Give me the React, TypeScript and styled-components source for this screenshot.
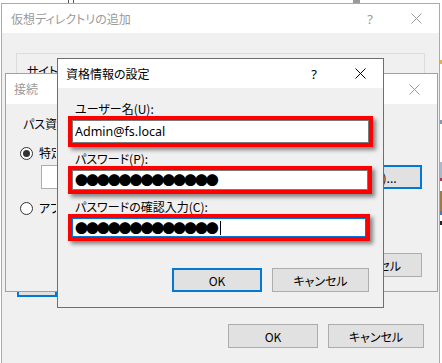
import React from "react";
import styled, { createGlobalStyle } from "styled-components";

const GlobalStyle = createGlobalStyle`
  html, body { margin: 0; padding: 0; background: #ffffff; }
  body {
    font-family: "Noto Sans CJK JP", "Noto Sans", sans-serif;
    font-size: 12px;
    font-feature-settings: "palt";
    color: #000;
  }
`;

const Desktop = styled.div`
  position: relative;
  width: 442px;
  height: 363px;
  overflow: hidden;
  background: #ffffff;
`;

const TopStrip = styled.div`
  position: absolute;
  left: 0;
  top: 0;
  width: 442px;
  height: 3px;
  display: flex;
`;

const StripPiece = styled.div<{ $w: number; $c: string }>`
  width: ${(p) => p.$w}px;
  flex: none;
  background: ${(p) => p.$c};
`;

const SideStrip = styled.div`
  position: absolute;
  left: 440px;
  top: 0;
  width: 2px;
  height: 363px;
  display: flex;
  flex-direction: column;
`;

const SidePiece = styled.div<{ $h: number; $c: string }>`
  height: ${(p) => p.$h}px;
  flex: none;
  background: ${(p) => p.$c};
`;

const Window = styled.div<{ $x: number; $y: number; $w: number; $h: number; $border: string }>`
  position: absolute;
  left: ${(p) => p.$x}px;
  top: ${(p) => p.$y}px;
  width: ${(p) => p.$w}px;
  height: ${(p) => p.$h}px;
  box-sizing: border-box;
  border: 1px solid ${(p) => p.$border};
  background: #f0f0f0;
  display: flex;
  flex-direction: column;
  overflow: hidden;
`;

const TitleBar = styled.div<{ $h: number; $pl: number }>`
  height: ${(p) => p.$h}px;
  flex: none;
  background: #ffffff;
  display: flex;
  align-items: center;
  padding-left: ${(p) => p.$pl}px;
`;

const Title = styled.span<{ $active?: boolean }>`
  flex: 1;
  color: ${(p) => (p.$active ? "#000000" : "#9a9a9a")};
  font-size: 12px;
  line-height: 14px;
  white-space: nowrap;
`;

const CaptionButton = styled.div<{ $active?: boolean }>`
  width: 46px;
  height: 100%;
  flex: none;
  display: flex;
  align-items: center;
  justify-content: center;
  color: ${(p) => (p.$active ? "#000000" : "#9a9a9a")};
  font-family: "Noto Sans", sans-serif;
  font-size: 13px;
`;

const CloseIcon = ({ color }: { color: string }) => (
  <svg width="11" height="11" viewBox="0 0 11 11">
    <path d="M0.5 0.5 L10.5 10.5 M10.5 0.5 L0.5 10.5" stroke={color} strokeWidth="1" fill="none" />
  </svg>
);

/* text that is partly covered by a window lying above it */
const Clip = styled.div<{ $w: number }>`
  width: ${(p) => p.$w}px;
  overflow: hidden;
  flex: none;
`;

/* ---------- outer window ---------- */
const OuterBody = styled.div`
  flex: 1;
  display: flex;
  flex-direction: column;
  padding: 20px 14px 0 14px;
`;

const GroupBox = styled.div`
  height: 209px;
  box-sizing: border-box;
  border: 1px solid #dcdcdc;
  padding: 10px 10px;
`;

const PlainText = styled.div`
  font-size: 12px;
  line-height: 14px;
  white-space: nowrap;
`;

const Button = styled.div<{ $w: number; $default?: boolean }>`
  width: ${(p) => p.$w}px;
  height: 24px;
  flex: none;
  box-sizing: border-box;
  border: ${(p) => (p.$default ? "2px solid #0078d7" : "1px solid #adadad")};
  background: #e1e1e1;
  display: flex;
  align-items: center;
  justify-content: center;
  font-size: 12px;
  white-space: nowrap;
`;

const SideButton = styled(Button)`
  margin: 11px 0 0 1px;
`;

const ButtonRow = styled.div<{ $mt: number; $pr: number }>`
  display: flex;
  justify-content: flex-end;
  gap: 10px;
  margin-top: ${(p) => p.$mt}px;
  padding-right: ${(p) => p.$pr}px;
`;

/* ---------- connect window ---------- */
const ConnectBody = styled.div`
  flex: 1;
  display: flex;
  flex-direction: column;
  padding: 13px 15px 14px 14px;
`;

const Indent = styled.div`
  padding-left: 3px;
`;

const RadioRow = styled.div<{ $mt: number }>`
  display: flex;
  align-items: center;
  gap: 6px;
  height: 14px;
  margin-top: ${(p) => p.$mt}px;
`;

const Radio = styled.div<{ $checked?: boolean }>`
  width: 13px;
  height: 13px;
  flex: none;
  box-sizing: border-box;
  border-radius: 50%;
  border: 1px solid #333333;
  background: #ffffff;
  display: flex;
  align-items: center;
  justify-content: center;
  &::after {
    content: "";
    width: 7px;
    height: 7px;
    border-radius: 50%;
    background: ${(p) => (p.$checked ? "#333333" : "transparent")};
  }
`;

const PathRow = styled.div`
  display: flex;
  align-items: center;
  margin-top: 5px;
  padding-left: 21px;
`;

const PathBox = styled.div`
  width: 260px;
  height: 24px;
  box-sizing: border-box;
  border: 1px solid #adadad;
  background: #ffffff;
`;

const PathSpacer = styled.div`
  flex: 1;
`;

const ConnectButtons = styled.div`
  margin-top: auto;
  display: flex;
  justify-content: flex-end;
  gap: 10px;
`;

/* ---------- credential window ---------- */
const CredBody = styled.div`
  flex: 1;
  display: flex;
  flex-direction: column;
  align-items: flex-start;
  padding: 14px 0 0 10px;
`;

const FieldLabel = styled.div<{ $mt: number }>`
  font-size: 12px;
  line-height: 14px;
  padding-left: 7px;
  margin-top: ${(p) => p.$mt}px;
  white-space: nowrap;
  u { text-decoration-thickness: 1px; text-underline-offset: 2px; }
`;

const RedFrame = styled.div<{ $w: number; $h: number }>`
  width: ${(p) => p.$w}px;
  height: ${(p) => p.$h}px;
  box-sizing: border-box;
  border: 4px solid #ff0000;
  box-shadow: 3px 3px 4px rgba(0, 0, 0, 0.45);
  display: flex;
`;

const TextInput = styled.div<{ $focus?: boolean }>`
  flex: 1;
  box-sizing: border-box;
  border: 1px solid ${(p) => (p.$focus ? "#0078d7" : "#7a7a7a")};
  background: #ffffff;
  display: flex;
  align-items: center;
  padding-left: 2px;
  font-family: "Noto Sans", "Noto Sans CJK JP", sans-serif;
  font-size: 12.5px;
  white-space: nowrap;
`;

const Dots = styled.span`
  font-family: "Noto Sans CJK JP", sans-serif;
  font-size: 13px;
  letter-spacing: -2.1px;
  line-height: 14px;
`;

const Caret = styled.span`
  display: inline-block;
  width: 1px;
  height: 14px;
  background: #000;
  margin-left: 3px;
`;

const CredButtons = styled(ButtonRow)`
  align-self: stretch;
`;

const dots = "●●●●●●●●●●●●●";

export default function App() {
  return (
    <>
      <GlobalStyle />
      <Desktop>
        <TopStrip>
          <StripPiece $w={68} $c="#ffffff" />
          <StripPiece $w={1} $c="#555555" />
          <StripPiece $w={4} $c="#ffffff" />
          <StripPiece $w={1} $c="#555555" />
          <StripPiece $w={279} $c="#ffffff" />
          <StripPiece $w={7} $c="#9a9a9a" />
          <StripPiece $w={82} $c="#ffffff" />
        </TopStrip>
        <SideStrip>
          <SidePiece $h={60} $c="#ffffff" />
          <SidePiece $h={4} $c="#e8b040" />
          <SidePiece $h={56} $c="#ffffff" />
          <SidePiece $h={4} $c="#8898b0" />
          <SidePiece $h={38} $c="#ffffff" />
          <SidePiece $h={16} $c="#a8b8d0" />
          <SidePiece $h={3} $c="#b03050" />
          <SidePiece $h={10} $c="#ffffff" />
          <SidePiece $h={20} $c="#a07850" />
          <SidePiece $h={4} $c="#4a78c0" />
          <SidePiece $h={6} $c="#ffffff" />
          <SidePiece $h={4} $c="#222222" />
          <SidePiece $h={138} $c="#ffffff" />
        </SideStrip>

        {/* 仮想ディレクトリの追加 */}
        <Window $x={1} $y={3} $w={439} $h={366} $border="#aaaaaa">
          <TitleBar $h={29} $pl={9}>
            <Title>仮想ディレクトリの追加</Title>
            <CaptionButton>?</CaptionButton>
            <CaptionButton>
              <CloseIcon color="#9a9a9a" />
            </CaptionButton>
          </TitleBar>
          <OuterBody>
            <GroupBox>
              <Clip $w={30}>
                <PlainText>サイト名(S):</PlainText>
              </Clip>
            </GroupBox>
            <SideButton $w={40} $default />
            <ButtonRow $mt={27} $pr={1}>
              <Button $w={90}>OK</Button>
              <Button $w={96}>キャンセル</Button>
            </ButtonRow>
          </OuterBody>
        </Window>

        {/* 接続 */}
        <Window $x={5} $y={73} $w={433} $h={219} $border="#a0a0a0">
          <TitleBar $h={30} $pl={8}>
            <Title>接続</Title>
            <CaptionButton>
              <CloseIcon color="#9a9a9a" />
            </CaptionButton>
          </TitleBar>
          <ConnectBody>
            <Indent>
              <Clip $w={34}>
                <PlainText>パス資格情報:</PlainText>
              </Clip>
            </Indent>
            <RadioRow $mt={15}>
              <Radio $checked />
              <Clip $w={17}>
                <PlainText>特定のユーザー(S):</PlainText>
              </Clip>
            </RadioRow>
            <PathRow>
              <PathBox />
              <PathSpacer />
              <Button $w={100} $default>
                設定(E)...
              </Button>
            </PathRow>
            <RadioRow $mt={12}>
              <Radio />
              <Clip $w={17}>
                <PlainText>アプリケーション ユーザー(A)</PlainText>
              </Clip>
            </RadioRow>
            <ConnectButtons>
              <Button $w={90} />
              <Button $w={96}>キャンセル</Button>
            </ConnectButtons>
          </ConnectBody>
        </Window>

        {/* 資格情報の設定 */}
        <Window $x={57} $y={58} $w={327} $h={250} $border="#6e6e6e">
          <TitleBar $h={29} $pl={8}>
            <Title $active>資格情報の設定</Title>
            <CaptionButton $active>?</CaptionButton>
            <CaptionButton $active>
              <CloseIcon color="#000000" />
            </CaptionButton>
          </TitleBar>
          <CredBody>
            <FieldLabel $mt={0}>
              ユーザー名(<u>U</u>):
            </FieldLabel>
            <RedFrame $w={305} $h={31}>
              <TextInput>Admin@fs.local</TextInput>
            </RedFrame>
            <FieldLabel $mt={5}>
              パスワード(<u>P</u>):
            </FieldLabel>
            <RedFrame $w={304} $h={28}>
              <TextInput>
                <Dots>{dots}</Dots>
              </TextInput>
            </RedFrame>
            <FieldLabel $mt={6}>
              パスワードの確認入力(<u>C</u>):
            </FieldLabel>
            <RedFrame $w={302} $h={27}>
              <TextInput $focus>
                <Dots>{dots}</Dots>
                <Caret />
              </TextInput>
            </RedFrame>
            <CredButtons $mt={27} $pr={14}>
              <Button $w={90} $default>
                OK
              </Button>
              <Button $w={97}>キャンセル</Button>
            </CredButtons>
          </CredBody>
        </Window>
      </Desktop>
    </>
  );
}
